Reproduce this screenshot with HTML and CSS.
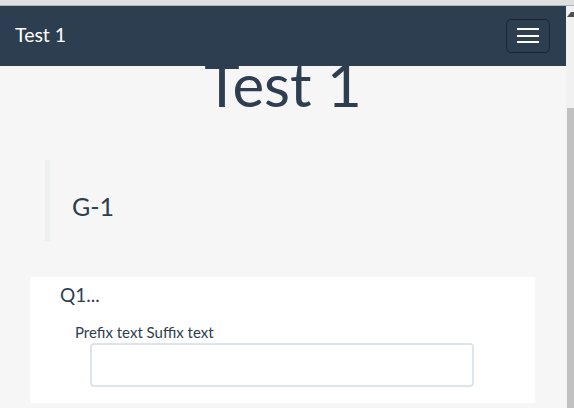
FILE: index.html
```html
<!DOCTYPE html>
<html>
<head>
<meta charset="utf-8">
<title>Test 1</title>
<link rel="stylesheet" href="styles.css">
</head>
<body>
<div class="topstrip"></div>
<div class="frame">
  <div class="viewport">
    <nav class="navbar">
      <span class="brand">Test 1</span>
      <button class="toggler" type="button" aria-label="Menu">
        <span class="bar"></span><span class="bar"></span><span class="bar"></span>
      </button>
    </nav>
    <main class="content">
      <h1 class="title">Test 1</h1>
      <blockquote class="group">
        <h3 class="group-name">G-1</h3>
      </blockquote>
      <section class="card">
        <h4 class="q-title">Q1...</h4>
        <div class="label">Prefix text Suffix text</div>
        <input class="field" type="text">
      </section>
    </main>
  </div>
  <div class="scrollbar">
    <svg class="arrow" width="8" height="6" viewBox="0 0 8 6"><polygon points="1,5 8,5 8,0 5,0" fill="#505050"/></svg>
    <div class="thumb"></div>
  </div>
</div>
</body>
</html>
```

FILE: styles.css
```css
html, body {
  margin: 0;
  padding: 0;
  width: 574px;
  height: 408px;
  overflow: hidden;
  font-family: Lato, "Open Sans", "Liberation Sans", sans-serif;
  color: #2c3e50;
}

.topstrip {
  height: 5px;
  background: #dfdfdf;
  border-bottom: 1px solid #b4b4b4;
}

.frame {
  display: flex;
  height: 402px;
}

.viewport {
  flex: 1;
  position: relative;
  overflow: hidden;
  background: #f6f6f6;
}

.navbar {
  position: absolute;
  top: 0;
  left: 0;
  right: 0;
  height: 60px;
  background: #2c3e50;
  display: flex;
  align-items: center;
  justify-content: space-between;
  padding: 0 16px 0 15px;
  z-index: 2;
}

.brand {
  color: #ffffff;
  font-size: 19.5px;
  line-height: 24px;
  margin-top: -2px;
}

.toggler {
  width: 44px;
  height: 34px;
  box-sizing: border-box;
  background: transparent;
  border: 1px solid #1b2633;
  border-radius: 5px;
  padding: 0;
  margin-top: -1px;
  display: flex;
  flex-direction: column;
  align-items: center;
  justify-content: center;
  gap: 4.5px;
}

.bar {
  display: block;
  width: 22px;
  height: 2px;
  background: #ffffff;
}

.content {
  padding: 45px 30px 0 30px;
}

.title {
  margin: 0;
  text-align: center;
  font-size: 60px;
  line-height: 66px;
  font-weight: 400;
  color: #2c3e50;
  margin-left: -30px;
  margin-right: -30px;
}

.group {
  margin: 43px 0 0 15px;
  padding: 31px 22px 20px 22px;
  border-left: 5px solid #ecf0f1;
}

.group-name {
  margin: 0;
  font-size: 25px;
  line-height: 30px;
  font-weight: 400;
}

.card {
  margin-top: 36px;
  width: 505px;
  background: #ffffff;
  padding: 6px 0 16px 0;
}

.q-title {
  margin: 0 0 0 30px;
  font-size: 19px;
  line-height: 24px;
  font-weight: 400;
}

.label {
  margin: 16px 0 0 45px;
  font-size: 15px;
  line-height: 18px;
}

.field {
  display: block;
  box-sizing: border-box;
  margin: 2px 0 0 60px;
  width: 384px;
  height: 44px;
  border: 2px solid #dce4ec;
  border-radius: 4px;
  background: #ffffff;
  padding: 0 10px;
  font-family: inherit;
  font-size: 15px;
}

.scrollbar {
  width: 8px;
  background: #f1f1f1;
  display: flex;
  flex-direction: column;
}

.arrow {
  display: block;
  margin-top: 6px;
}

.thumb {
  margin: 90px 0 0 1px;
  flex: 1;
  background: #c1c1c1;
}
```
